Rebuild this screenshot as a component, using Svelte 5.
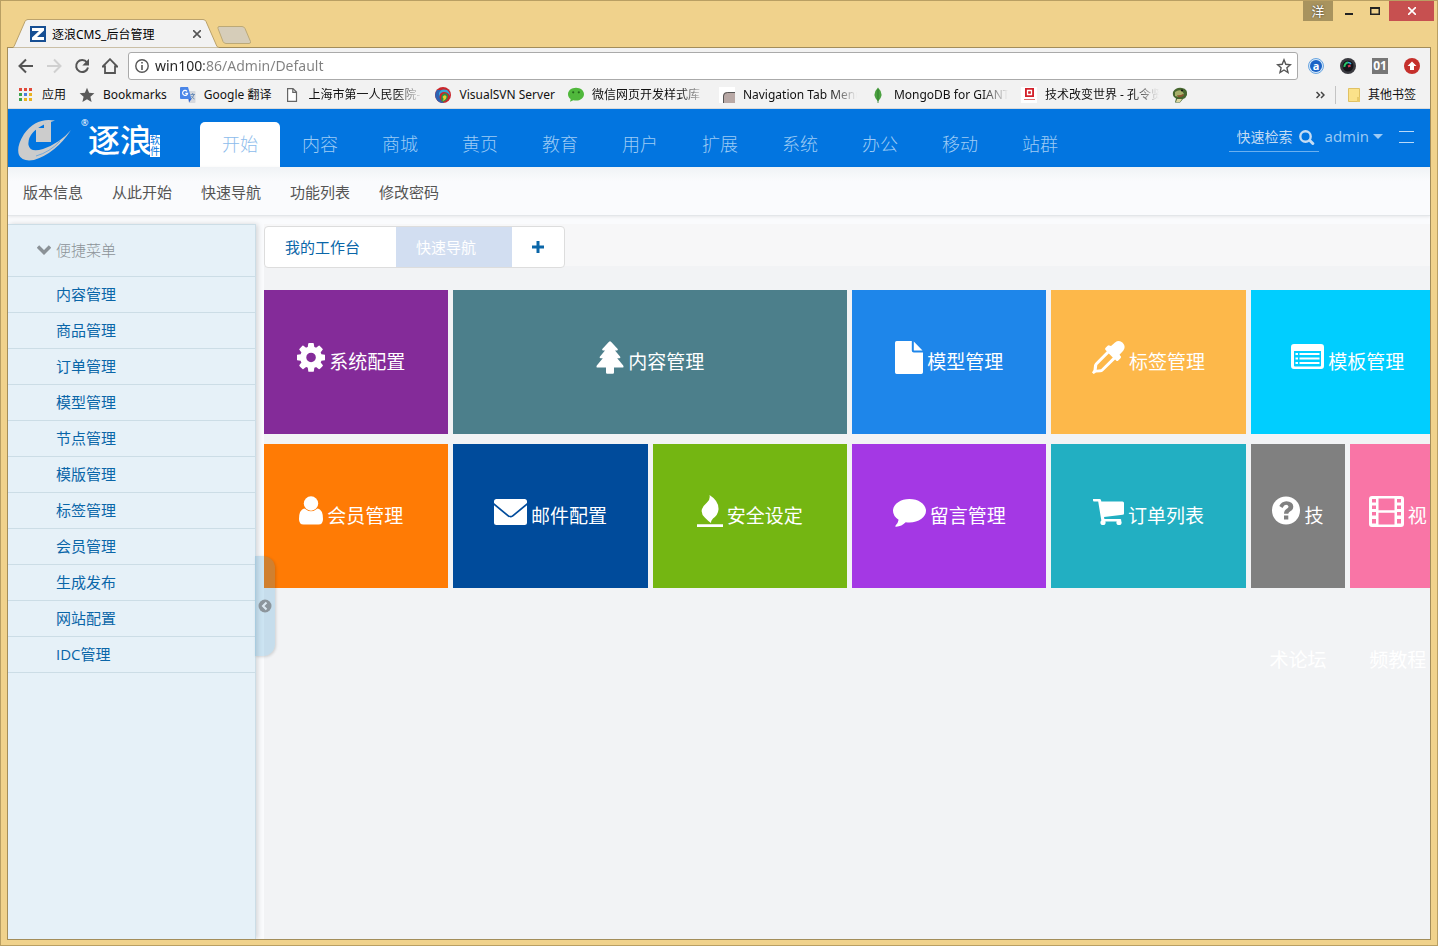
<script>
    let search = $state('');
    let address = $state('win100:86/Admin/Default');
    let collapsed = $state(false);

    const bookmarks = [
        {icon: 'apps', label: '应用'},
        {icon: 'star', label: 'Bookmarks'},
        {icon: 'translate', label: 'Google 翻译'},
        {icon: 'page', label: '上海市第一人民医院-', fade: true},
        {icon: 'svn', label: 'VisualSVN Server'},
        {icon: 'wechat', label: '微信网页开发样式库', fade: true},
        {icon: 'nav', label: 'Navigation Tab Menu', fade: true},
        {icon: 'leaf', label: 'MongoDB for GIANT', fade: true},
        {icon: 'seal', label: '技术改变世界 - 孔令贤', fade: true},
        {icon: 'dino', label: ''}
    ];

    const nav = ['开始', '内容', '商城', '黄页', '教育', '用户', '扩展', '系统', '办公', '移动', '站群'];
    const subnav = ['版本信息', '从此开始', '快速导航', '功能列表', '修改密码'];
    const menu = ['内容管理', '商品管理', '订单管理', '模型管理', '节点管理', '模版管理', '标签管理', '会员管理', '生成发布', '网站配置', 'IDC管理'];

    const tiles = [
        {label: '系统配置', icon: 'cog', w: 28, size: 'm', color: 'purple'},
        {label: '内容管理', icon: 'tree', w: 28, size: 'l', color: 'teal'},
        {label: '模型管理', icon: 'file', w: 28, size: 'm', color: 'blue'},
        {label: '标签管理', icon: 'dropper', w: 33, size: 'm', color: 'amber'},
        {label: '模板管理', icon: 'list', w: 33, size: 'm', color: 'cyan'},
        {label: '会员管理', icon: 'user', w: 24, size: 'm', color: 'orange'},
        {label: '邮件配置', icon: 'mail', w: 33, size: 'm', color: 'navy'},
        {label: '安全设定', icon: 'fire', w: 26, size: 'm', color: 'green'},
        {label: '留言管理', icon: 'comment', w: 33, size: 'm', color: 'violet'},
        {label: '订单列表', icon: 'cart', w: 31, size: 'm', color: 'aqua'},
        {label: '技术论坛', icon: 'question', w: 28, size: 's', color: 'gray'},
        {label: '视频教程', icon: 'film', w: 35, size: 's', color: 'pink'}
    ];
</script>

{#snippet bookmarkIcon(name)}
    <svg width="16" height="16" viewBox="0 0 16 16" aria-hidden="true">
        {#if name === 'apps'}
            <path fill="#e04a3a" d="M1 1h3v3H1zM6 1h3v3H6zM11 1h3v3h-3z"/>
            <path fill="#3fa34d" d="M1 6h3v3H1zM1 11h3v3H1z"/>
            <path fill="#4a7fe0" d="M6 6h3v3H6z"/>
            <path fill="#e8b321" d="M11 6h3v3h-3zM6 11h3v3H6zM11 11h3v3h-3z"/>
        {:else if name === 'star'}
            <path fill="#5a5a5a" d="M8 .8l2.1 5 5.3.4-4 3.5 1.2 5.3L8 12.200l-4.600 2.800 1.200-5.300-4-3.500 5.300-.4z"/>
        {:else if name === 'translate'}
            <path fill="#d5d8de" d="M7 4h7.500q1 0 1 1v10q0 1-1 1H9z"/>
            <path fill="#4a86e8" d="M1 0h7l3.500 12H1q-1 0-1-1V1q0-1 1-1z"/>
            <path fill="#3367d6" d="M8.500 12h3l-2.500 3.500z"/>
            <path fill="none" stroke="#fff" stroke-width="1.200" d="M7 4.300a2.500 2.500 0 1 0 .6 2H5.300"/>
            <path fill="none" stroke="#6f8fb8" d="M10.500 7.500h4.500M12.700 6v1.500M14 7.500q-1 3-3 4.500M11.500 9q1 2 3 3"/>
        {:else if name === 'page'}
            <path fill="#fff" stroke="#666" stroke-width="1.200" d="M3.600 1.600h5.400l3.500 3.500v9.300H3.600zM8.800 1.600v3.700h3.700"/>
        {:else if name === 'svn'}
            <circle cx="8" cy="8" r="8" fill="#c9252b"/>
            <path fill="#2d62b3" d="M2 3a8 8 0 0 0 7 13q-5-3-4.500-8Q5 4 8 3z"/>
            <path fill="#35a6d8" d="M4 6q2-5 8-3 3 2 3 6-2-4-6-4T4 10z"/>
            <path fill="#279447" d="M7 15q-2-6 1-8 4-2 5 2 0 5-6 6z"/>
            <path fill="#f0c92c" d="M7.500 10q2-3 4-.5 0 3-4 4.500 2-2 0-4z"/>
        {:else if name === 'wechat'}
            <path fill="#50b83c" d="M8 .8c4.500 0 8 2.800 8 6.400s-3.500 6.400-8 6.400q-1.400 0-2.600-.3L2 14.800l.7-2.700C1 11 0 9.300 0 7.200 0 3.600 3.500.8 8 .8z"/>
            <circle cx="5.200" cy="5.300" r="1.100" fill="#25671b"/>
            <circle cx="10.800" cy="5.300" r="1.100" fill="#25671b"/>
        {:else if name === 'nav'}
            <path fill="#fff" d="M0 0h16v16H0z"/>
            <path fill="#b8a8a5" d="M4 16V9q0-4 4.500-4H16v11z"/>
            <path fill="none" stroke="#555" d="M4.500 16V9q0-3.500 4-3.500H16"/>
        {:else if name === 'leaf'}
            <path fill="#4aa03f" d="M8 .5q7 7 0 14-7-7 0-14z"/>
            <path stroke="#2c7a2a" stroke-width=".8" d="M8 2v14"/>
        {:else if name === 'seal'}
            <path fill="#fff" d="M0 0h16v16H0z"/>
            <path fill="#d3202a" d="M4 1h9v9H4z"/>
            <path fill="#d3202a" stroke="#fff" stroke-width="1.300" d="M6.500 3.500h4v4h-4z"/>
            <path stroke="#e07070" d="M3 12.500h11"/>
        {:else if name === 'dino'}
            <path fill="#47672f" d="M1 5q3-5 9-4 6 1 5 7-1 3-4 4l-3 3.500H3l1-4q-4-2-3-6.500z"/>
            <path fill="#a9b06a" d="M3 5q4-3 7-1l2 3-5 3-4-1z"/>
            <path fill="#8a5530" d="M5 8q3 1 6-1l1 1.500q-3 2.500-6 1.500z"/>
            <path fill="#dcd6a0" d="M5 12h5l-2 3H4z"/>
            <circle cx="10" cy="3.500" r="1" fill="#111"/>
        {/if}
    </svg>
{/snippet}

{#snippet tileIcon(name, w)}
    <svg class="tile-icon" width={w} height="34" viewBox="0 0 {w} 34" fill="#fff" aria-hidden="true">
        {#if name === 'cog'}
            <g transform="translate(-2.700 -.3) scale(.0187)">
                <path d="M1152 896q0-106-75-181t-181-75-181 75-75 181 75 181 181 75 181-75 75-181zm512-109v222q0 12-8 23t-20 13l-185 28q-19 54-39 91 35 50 107 138 10 12 10 25t-9 23q-27 37-99 108t-94 71q-12 0-26-9l-138-108q-44 23-91 38-16 136-29 186-7 28-36 28h-222q-14 0-24.500-8.500t-11.500-21.500l-28-184q-49-16-90-37l-141 107q-10 9-25 9-14 0-25-11-126-114-165-168-7-10-7-23 0-12 8-23 15-21 51-66.500t54-70.500q-27-50-41-99l-183-27q-13-2-21-12.500t-8-23.500v-222q0-12 8-23t19-13l186-28q14-46 39-92-40-57-107-138-10-12-10-24 0-10 9-23 26-36 98.500-107.500t94.500-71.500q13 0 26 10l138 107q44-23 91-38 16-136 29-186 7-28 36-28h222q14 0 24.500 8.500t11.500 21.500l28 184q49 16 90 37l142-107q9-9 24-9 13 0 25 10 129 119 165 170 7 8 7 22 0 12-8 23-15 21-51 66.500t-54 70.500q26 50 41 98l183 28q13 2 21 12.500t8 23.500z"/>
            </g>
        {:else if name === 'tree'}
            <path d="M13 .8q1-1 2 0l6.500 7q1 1.700-.7 1.700H19l5 6q1 1.800-.8 1.800h-2l6 7.200q1 2-.9 2H18v5q0 1.200-1.200 1.200h-5.600q-1.200 0-1.200-1.200v-5H1.700q-1.900 0-.9-2l6-7.200h-2q-1.800 0-.8-1.800l5-6H7.200q-1.700 0-.7-1.700z"/>
        {:else if name === 'file'}
            <path d="M0 1.700Q0 0 1.700 0H16.800v9.500q0 2 2 2H28v19.800q0 1.700-1.700 1.700H1.700Q0 33 0 31.300zM18.800 0.500l8.700 9h-8.700z"/>
        {:else if name === 'dropper'}
            <path fill-rule="evenodd" d="M19 5l4-3.500q4-3 7.700.2 3.600 4 .5 8l-3.700 4 1 1.200q1.200 1.200 0 2.400l-2.200 2.200q-1.200 1-2.200 0l-1-1L11 30.200q-1 .9-2.500 1L4 31.500 1.700 33 0 31.400l1.500-2.500.5-4.400q.2-1.500 1.200-2.500L14.800 10.300l-1.200-1.200q-1-1.200 0-2.300l2-2.100q1.200-1 2.400 0zM16.800 12.500L5.300 24l-.6 4.700 4.300-.5 11.800-11.700z"/>
        {:else if name === 'list'}
            <path fill-rule="evenodd" d="M3 3h27q3 0 3 3v19q0 3-3 3H3q-3 0-3-3V6q0-3 3-3zm0 7v14.500q0 1 1 1h25q1 0 1-1V10z"/>
            <path d="M4.500 12H7V14H4.500zM8.500 12H28.500V14H8.500zM4.500 16.500H7V18.500H4.500zM8.500 16.500H28.500V18.500H8.500zM4.500 21H7V23H4.500zM8.500 21H28.500V23H8.500z"/>
        {:else if name === 'user'}
            <circle cx="12" cy="8.500" r="7.200"/>
            <path d="M5.500 13.500Q12 19 18.500 13.500 24 14.500 24 24q0 5.500-4.500 5.500h-15Q0 29.500 0 24q0-9.500 5.500-10.500z"/>
        {:else if name === 'mail'}
            <path d="M2.500 4h28Q33 4 33 6.500V8L18.500 20q-2 1.700-4 0L0 8V6.500Q0 4 2.500 4z"/>
            <path d="M0 10.300L13.700 21.400q2.800 2 5.600 0L33 10.300V27.500q0 2.500-2.500 2.500h-28Q0 30 0 27.500z"/>
        {:else if name === 'fire'}
            <path d="M12.500 0q9.500 6 9 14.500Q21 20 16 23.500q-2 2-2 4.500-3-2-6-5.200Q3.500 18.500 5 14q1.200-3.200 5-6.500 3.500-3 2.500-7.500zM0 29.300h26V32H0z"/>
        {:else if name === 'comment'}
            <path d="M16.500 4C25.600 4 33 9.200 33 15.800s-7.400 11.700-16.500 11.700q-2 0-3.800-.3-4 4-9.500 4.600-1.400 0-.6-1.300Q5 28.200 5.600 24.700 0 21.200 0 15.800C0 9.200 7.400 4 16.500 4z"/>
        {:else if name === 'cart'}
            <path d="M0 4h6.500q1.200 0 1.500 1l.3 1.400h21.200q1.500 0 1.500 1.500v10.500q0 1.200-1.300 1.400L11 22l.4 2H27q1.300 0 1.300 1.200T27 26.500H9.800q-1.200 0-1.500-1.200L5.200 6.500H1Q0 6.500 0 5.300z"/>
            <circle cx="10" cy="27.500" r="2.600"/>
            <circle cx="26" cy="27.500" r="2.600"/>
        {:else if name === 'question'}
            <circle cx="14" cy="15.500" r="14"/>
            <g transform="translate(14 15.500)" fill="#808080">
                <path d="M-6.700-4.500Q-4.500-9 .3-9.300q6.700.2 7 5.300 0 3.300-3 4.800Q2.300 2 2.300 3.200H-2Q-2-.3.800-1.800q1.800-1 1.700-2.200-.4-1.700-2.400-1.700T-3.500-2.500zM-2 5h4.300v4H-2z"/>
            </g>
        {:else if name === 'film'}
            <path fill-rule="evenodd" d="M3 1h29q3 0 3 3v25q0 3-3 3H3q-3 0-3-3V4q0-3 3-3zM9.500 3.500v11.700h16V3.500zM9.500 17.800v11.700h16V17.800zM3 4v3.500h4V4zM3 10.500V14h4v-3.500zM3 17v3.500h4V17zM3 24v4.500h4V24zM28 4v3.500h4V4zM28 10.500V14h4v-3.500zM28 17v3.500h4V17zM28 24v4.500h4V24z"/>
        {/if}
    </svg>
{/snippet}

<div class="window">
    <div class="titlebar">
        <div class="browser-tab">
            <svg class="tab-shape" viewBox="0 0 206 30" preserveAspectRatio="none" aria-hidden="true">
                <path fill="#f2f2f2" stroke="#b9a069" d="M0 29.500L1 28.500 12 2.500Q13 .5 15 .5H190q2 0 3 2L204 28.500 206 29.500"/>
            </svg>
            <svg class="favicon" width="16" height="16" viewBox="0 0 16 16" aria-hidden="true">
                <path fill="#174f93" d="M0 0h16v16H0z"/>
                <path fill="#fff" d="M2 2h12v2.500L7 11h7v3H2v-2.500L9 5H2z"/>
            </svg>
            <span class="tab-title">逐浪CMS_后台管理</span>
            <button class="tab-close" aria-label="关闭标签页">
                <svg width="8" height="8" viewBox="0 0 8 8"><path stroke="#555" stroke-width="1.600" d="M0 0l8 8M8 0L0 8"/></svg>
            </button>
        </div>
        <button class="new-tab" aria-label="新标签页">
            <svg width="34" height="18" viewBox="0 0 34 18">
                <path fill="#d6cdb9" stroke="#bca977" d="M2 .5h23q2 0 3 2l5.500 13q.5 2-1.500 2H9q-2 0-3-2l-5-13q-.5-2 1-2z"/>
            </svg>
        </button>
        <div class="window-buttons">
            <button class="account">洋</button>
            <button class="wbtn" aria-label="最小化"><svg width="8" height="10"><path fill="#222" d="M0 7h8v2H0z"/></svg></button>
            <button class="wbtn" aria-label="最大化"><svg width="10" height="8"><path fill="none" stroke="#222" stroke-width="2" d="M0 1h10M.5 0v8M9.500 0v8M0 7.500h10"/></svg></button>
            <button class="wbtn close" aria-label="关闭"><svg width="8" height="8"><path stroke="#fff" stroke-width="1.600" d="M0 0l8 8M8 0L0 8"/></svg></button>
        </div>
    </div>

    <div class="browser">
        <div class="toolbar">
            <button aria-label="后退"><svg width="16" height="16" viewBox="0 0 16 16"><path fill="none" stroke="#555" stroke-width="2" d="M15 8H2M8 1.500L1.500 8 8 14.500"/></svg></button>
            <button aria-label="前进"><svg width="16" height="16" viewBox="0 0 16 16"><path fill="none" stroke="#d0d0d0" stroke-width="2" d="M1 8h13M8 1.500L14.500 8 8 14.500"/></svg></button>
            <button aria-label="刷新"><svg width="16" height="16" viewBox="0 0 16 16"><path fill="none" stroke="#555" stroke-width="2" d="M13 4.500A6 6 0 1 0 14 9.500"/><path fill="#555" d="M15 .8v6.700H8.300z"/></svg></button>
            <button aria-label="主页"><svg width="16" height="16" viewBox="0 0 16 16"><path fill="none" stroke="#555" stroke-width="1.800" d="M.8 8.500L8 1.200l7.200 7.300H13V15H3V8.500z"/></svg></button>
            <div class="omnibox">
                <svg width="14" height="14" viewBox="0 0 14 14" aria-hidden="true"><circle cx="7" cy="7" r="6.200" fill="none" stroke="#555" stroke-width="1.400"/><path stroke="#555" stroke-width="1.600" d="M7 3v1.600M7 6v5"/></svg>
                <input type="text" aria-label="地址" spellcheck="false" bind:value={address}>
                <button aria-label="收藏"><svg width="16" height="16" viewBox="0 0 16 16"><path fill="none" stroke="#555" stroke-width="1.400" d="M8 1.800l1.800 4.500 4.700.4-3.600 3.100 1.100 4.700-4-2.500-4 2.500 1.100-4.700L1.500 6.700l4.700-.4z"/></svg></button>
            </div>
            <div class="extensions">
                <button aria-label="字典"><svg width="16" height="16" viewBox="0 0 16 16"><circle cx="8" cy="8" r="7.500" fill="#d5e8fa" stroke="#6aa5e0"/><circle cx="8" cy="8" r="6" fill="#1b63c6"/><text x="8" y="11.500" text-anchor="middle" font-size="11" font-weight="bold" font-family="Open Sans, sans-serif" fill="#fff">a</text></svg></button>
                <button aria-label="取色"><svg width="16" height="16" viewBox="0 0 16 16"><circle cx="8" cy="8" r="8" fill="#3a3a40"/><circle cx="8" cy="8" r="5.500" fill="#15151a"/><path fill="none" stroke="#28c76a" stroke-width="2" d="M4.500 9A4 4 0 0 1 8 4.500"/><path fill="none" stroke="#d43c5a" stroke-width="2" d="M8 8.500l2.500-1"/><path fill="none" stroke="#39a6e0" stroke-width="1.500" d="M8 4.500q2 0 3 1.500"/></svg></button>
                <button aria-label="编码" class="ext-01">01</button>
                <button aria-label="更新"><svg width="16" height="16" viewBox="0 0 16 16"><circle cx="8" cy="8" r="8" fill="#c5302c"/><path fill="#fff" d="M8 3.500L12.500 8H10v4H6V8H3.500z"/></svg></button>
            </div>
        </div>

        <div class="bookmarks">
            {#each bookmarks as item}
                <a href="#bookmark" aria-label={item.label || '书签'}>
                    {@render bookmarkIcon(item.icon)}
                    {#if item.label}
                        <span class:fade={item.fade}>{item.label}</span>
                    {/if}
                </a>
            {/each}
            <div class="bookmarks-end">
                <button aria-label="更多书签">
                    <svg width="9" height="8" viewBox="0 0 9 8"><path fill="none" stroke="#444" stroke-width="1.500" d="M.5 1l3 3-3 3M5 1l3 3-3 3"/></svg>
                </button>
                <a href="#others">
                    <svg width="12" height="14" viewBox="0 0 12 14" aria-hidden="true"><path fill="#fbe28a" stroke="#e0c163" d="M.5.5h11v13H.5z"/><path fill="#e9cb6a" d="M9 9h3v5H9z"/></svg>
                    <span>其他书签</span>
                </a>
            </div>
        </div>

        <header>
            <a class="logo" href="#home" aria-label="逐浪">
                <svg width="54" height="44" viewBox="0 0 54 44" aria-hidden="true">
                    <path fill="#ccc" d="M37 2.500Q18-1 6 16-2 29 1 37q3 7 15 5 22-7 37-30Q42 25 25 31 12 35 10.500 27 9 15 27 6z"/>
                    <path fill="#ccc" d="M18 10h8V6l7-3v21H18z"/>
                    <path fill="none" stroke="#5a9fe0" stroke-width=".8" d="M18 38Q32 34 42 23"/>
                </svg>
                <sup>®</sup>
                <strong>逐浪</strong>
                <small>软件</small>
            </a>
            <nav>
                {#each nav as item, i}
                    <a href="#{item}" class:active={i === 0}>{item}</a>
                {/each}
            </nav>
            <div class="tools">
                <label class="search">
                    <input type="text" placeholder="快速检索" aria-label="快速检索" bind:value={search}>
                    <svg width="16" height="16" viewBox="0 0 16 16"><circle cx="6.500" cy="7.500" r="5.200" fill="none" stroke="#c5dcf3" stroke-width="2.400"/><path stroke="#c5dcf3" stroke-width="3" stroke-linecap="round" d="M10.800 11.500l3 3"/></svg>
                </label>
                <button class="user">admin<i></i></button>
                <button class="burger" aria-label="菜单"></button>
            </div>
        </header>

        <div class="subnav">
            {#each subnav as item}
                <a href="#{item}">{item}</a>
            {/each}
        </div>

        <div class="body">
            <aside class:collapsed>
                <h2>
                    <svg width="14" height="10" viewBox="0 0 14 10" aria-hidden="true"><path fill="none" stroke="#8b9297" stroke-width="3.400" d="M1 1.500l6 6 6-6"/></svg>
                    便捷菜单
                </h2>
                <ul>
                    {#each menu as item}
                        <li><a href="#{item}">{item}</a></li>
                    {/each}
                </ul>
                <button class="handle" aria-label="收起菜单" onclick={() => collapsed = !collapsed}>
                    <svg width="14" height="14" viewBox="0 0 14 14"><circle cx="7" cy="7" r="6.500" fill="#8c959c"/><path fill="none" stroke="#dce8f1" stroke-width="2" d="M8.500 3.500L5 7l3.500 3.500"/></svg>
                </button>
            </aside>

            <main>
                <div class="tabs">
                    <div class="tab-group">
                        <button>我的工作台</button>
                        <button class="active">快速导航</button>
                        <button class="add" aria-label="添加">
                            <svg width="12" height="12" viewBox="0 0 12 12"><path stroke="#0a66a8" stroke-width="3" d="M6 0v12M0 6h12"/></svg>
                        </button>
                    </div>
                </div>
                <div class="tiles">
                    {#each tiles as tile}
                        <a href="#{tile.label}" class="tile {tile.size} {tile.color}">{@render tileIcon(tile.icon, tile.w)}{tile.label}</a>
                    {/each}
                </div>
            </main>
        </div>
    </div>
</div>

<style>
    :global(body) {
        margin: 0;
        background: #f0d28c;
        font-family: "Open Sans", "Noto Sans CJK SC", sans-serif;
    }

    * {
        box-sizing: border-box;
    }

    a {
        text-decoration: none;
        color: inherit;
    }

    button {
        border: 0;
        padding: 0;
        background: none;
        font: inherit;
        color: inherit;
        cursor: pointer;
    }

    input {
        border: 0;
        padding: 0;
        outline: none;
        min-width: 0;
        font: inherit;
    }

    svg {
        display: block;
        flex: none;
    }

    .window {
        display: flex;
        flex-direction: column;
        min-height: 100vh;
        padding: 0 6px 5px;
        border: 1px solid #b99f63;
        background: #f0d28c;
    }

    /* title bar */
    .titlebar {
        display: flex;
        align-items: flex-end;
        height: 46px;
        padding-left: 6px;
    }

    .browser-tab {
        position: relative;
        display: flex;
        align-items: center;
        width: 206px;
        height: 29px;
        margin-bottom: -1px;
        padding: 0 18px 0 17px;
        font-family: "Noto Sans", "Noto Sans CJK SC", sans-serif;
        font-size: 12px;
        z-index: 1;
    }

    .tab-shape {
        position: absolute;
        inset: 0;
        width: 100%;
        height: 100%;
    }

    .favicon, .tab-title, .tab-close {
        position: relative;
    }

    .tab-title {
        flex: 1;
        margin-left: 6px;
        white-space: nowrap;
    }

    .new-tab {
        margin: 0 0 3px -2px;
    }

    .window-buttons {
        display: flex;
        align-self: flex-start;
        height: 20px;
        margin: 0 -3px 0 auto;
    }

    .account {
        width: 30px;
        background: #a8935e;
        color: #fff;
        font-size: 13px;
        line-height: 20px;
        text-shadow: 0 0 2px #333;
    }

    .wbtn {
        display: grid;
        place-items: center;
        width: 28px;
    }

    .account + .wbtn {
        padding-left: 4px;
    }

    .wbtn.close {
        width: 45px;
        background: #c75050;
    }

    /* browser chrome */
    .browser {
        display: flex;
        flex-direction: column;
        flex: 1;
        border: 1px solid #a38d5a;
        background: #f2f2f2;
        overflow: hidden;
    }

    .toolbar {
        display: flex;
        align-items: center;
        gap: 12px;
        height: 32px;
        margin-top: 2px;
        padding: 0 10px;
    }

    .toolbar > button {
        width: 16px;
    }

    .omnibox {
        display: flex;
        flex: 1;
        align-items: center;
        height: 28px;
        margin-left: -2px;
        padding: 0 5px 0 6px;
        border: 1px solid #aaa;
        border-radius: 3px;
        background: #fff;
    }

    .omnibox input {
        flex: 1;
        margin-left: 6px;
        font-family: "Noto Sans", sans-serif;
        font-size: 14px;
        line-height: 24px;
        background: linear-gradient(to right, #222 49px, #808080 49px);
        background-clip: text;
        -webkit-background-clip: text;
        color: transparent;
    }

    .extensions {
        display: flex;
        gap: 16px;
        margin-left: -2px;
    }

    .ext-01 {
        width: 16px;
        height: 16px;
        background: #777;
        color: #fff;
        font-size: 12px;
        font-weight: bold;
        line-height: 14px;
    }

    .bookmarks {
        display: flex;
        align-items: center;
        gap: 13px;
        height: 27px;
        padding: 0 14px 0 10px;
        border-bottom: 1px solid #dadada;
        font-family: "Noto Sans", "Noto Sans CJK SC", sans-serif;
        font-size: 12px;
        line-height: 18px;
        color: #111;
        white-space: nowrap;
    }

    .bookmarks a {
        display: flex;
        align-items: center;
        gap: 8px;
    }

    .fade {
        width: 114px;
        overflow: hidden;
        mask-image: linear-gradient(to right, #000 88px, transparent 114px);
    }

    .bookmarks-end {
        display: flex;
        align-items: center;
        gap: 10px;
        margin-left: auto;
    }

    .bookmarks-end a {
        padding-left: 12px;
        border-left: 1px solid #c4c4c4;
    }

    /* admin header */
    header {
        display: flex;
        height: 58px;
        background: #0275e0;
        color: #9dcbf5;
    }

    .logo {
        display: flex;
        align-items: center;
        width: 192px;
        padding: 4px 0 0 10px;
        color: #fff;
    }

    .logo sup {
        align-self: flex-start;
        width: 7px;
        margin: 4px 0 0 9px;
        font-size: 9px;
        line-height: 12px;
    }

    .logo strong {
        font-size: 32px;
        font-weight: 500;
        line-height: 40px;
    }

    .logo small {
        width: 10px;
        margin: 12px 0 0 -2px;
        background: #fff;
        color: #0275e0;
        font-size: 10px;
        line-height: 11px;
    }

    nav {
        display: flex;
        align-items: flex-end;
    }

    nav a {
        width: 80px;
        height: 45px;
        border-radius: 5px 5px 0 0;
        font-size: 18px;
        font-weight: 300;
        line-height: 44px;
        text-align: center;
    }

    nav a.active {
        background: #fff;
        color: #8dbcec;
    }

    .tools {
        display: flex;
        align-items: center;
        height: 56px;
        margin-left: auto;
        padding-right: 16px;
    }

    .search {
        display: flex;
        align-items: center;
        width: 90px;
        height: 30px;
        margin-right: 6px;
        padding: 0 4px 0 8px;
        border-bottom: 1px solid #6bb0ef;
    }

    .search input {
        flex: 1;
        background: none;
        color: #c5dcf3;
        font-size: 14px;
    }

    .search input::placeholder {
        color: #c5dcf3;
    }

    .user {
        display: flex;
        align-items: center;
        padding-bottom: 2px;
        font-size: 15px;
    }

    .user i {
        margin-left: 4px;
        border: 5px solid transparent;
        border-top-color: currentColor;
        border-bottom: 0;
    }

    .burger {
        width: 15px;
        height: 12px;
        margin-left: 16px;
        border-top: 1px solid #b9daf8;
        border-bottom: 1px solid #b9daf8;
    }

    .subnav {
        display: flex;
        gap: 29px;
        height: 49px;
        padding: 0 15px;
        background: linear-gradient(#f0f3f6, #fafbfd 14px);
        border-bottom: 1px solid #e3e6e9;
        box-shadow: 0 1px 3px rgba(0, 0, 0, 0.08);
        color: #555;
        font-size: 15px;
        line-height: 50px;
        z-index: 1;
    }

    /* page body */
    .body {
        display: flex;
        flex: 1;
        padding-top: 8px;
        background: #fafbfd;
    }

    aside {
        position: relative;
        flex: none;
        width: 248px;
        border: 1px solid #ccdde6;
        border-width: 1px 1px 0 0;
        background: #e6f1f8;
        box-shadow: 2px 0 5px rgba(0, 0, 0, 0.15);
        font-size: 15px;
        z-index: 1;
    }

    aside.collapsed {
        width: 0;
    }

    aside.collapsed h2,
    aside.collapsed ul {
        display: none;
    }

    h2 {
        display: flex;
        align-items: center;
        gap: 5px;
        height: 52px;
        margin: 0;
        padding: 0 0 2px 29px;
        border-bottom: 1px solid #ccdde6;
        color: #8b9297;
        font-size: 15px;
        font-weight: 300;
    }

    ul {
        margin: 0;
        padding: 0;
        list-style: none;
    }

    li a {
        display: block;
        height: 36px;
        padding-left: 48px;
        border-bottom: 1px solid #ccdde6;
        color: #0a66a8;
        line-height: 35px;
    }

    .handle {
        position: absolute;
        top: 331px;
        left: 100%;
        display: grid;
        place-items: center;
        width: 20px;
        height: 100px;
        border-radius: 0 12px 12px 0;
        background: rgba(40, 145, 203, 0.22);
        box-shadow: 1px 1px 3px rgba(0, 0, 0, 0.15);
    }

    main {
        flex: 1;
        min-width: 0;
        margin-left: 8px;
        background: #f2f3f5;
        overflow: hidden;
    }

    .tabs {
        height: 42px;
        margin-bottom: 24px;
        padding-top: 2px;
        background: #f7f7f8;
    }

    .tab-group {
        display: inline-flex;
        height: 42px;
        border: 1px solid #ddd;
        border-radius: 4px;
        background: #fff;
        color: #0a66a8;
        font-size: 15px;
        overflow: hidden;
    }

    .tab-group button {
        padding: 0 36px 2px 20px;
    }

    .tab-group .active {
        background: #d2def1;
        color: #fff;
    }

    .tab-group .add {
        padding: 0 20px;
    }

    /* the outer tiles run past both edges of the panel */
    .tiles {
        display: grid;
        grid-template-columns: repeat(12, 1fr);
        gap: 10px 5px;
        margin: 0 -15px 0 -10px;
    }

    .tile {
        height: 144px;
        min-width: 0;
        padding: 0 15px;
        color: #fff;
        font-size: 19px;
        line-height: 144px;
        text-align: center;
    }

    .tile-icon {
        display: inline-block;
        margin: -11px 4px 0 0;
        vertical-align: middle;
    }

    .s { grid-column: span 1; }
    .m { grid-column: span 2; }
    .l { grid-column: span 4; }

    .purple { background: #842b99; }
    .teal { background: #4c7f8b; }
    .blue { background: #1e86ea; }
    .amber { background: #fdb84a; }
    .cyan { background: #00ceff; }
    .orange { background: #ff7b05; }
    .navy { background: #004b9b; }
    .green { background: #74b612; }
    .violet { background: #a438e4; }
    .aqua { background: #22afc2; }
    .gray { background: #808080; }
    .pink { background: #f975a6; }
</style>
